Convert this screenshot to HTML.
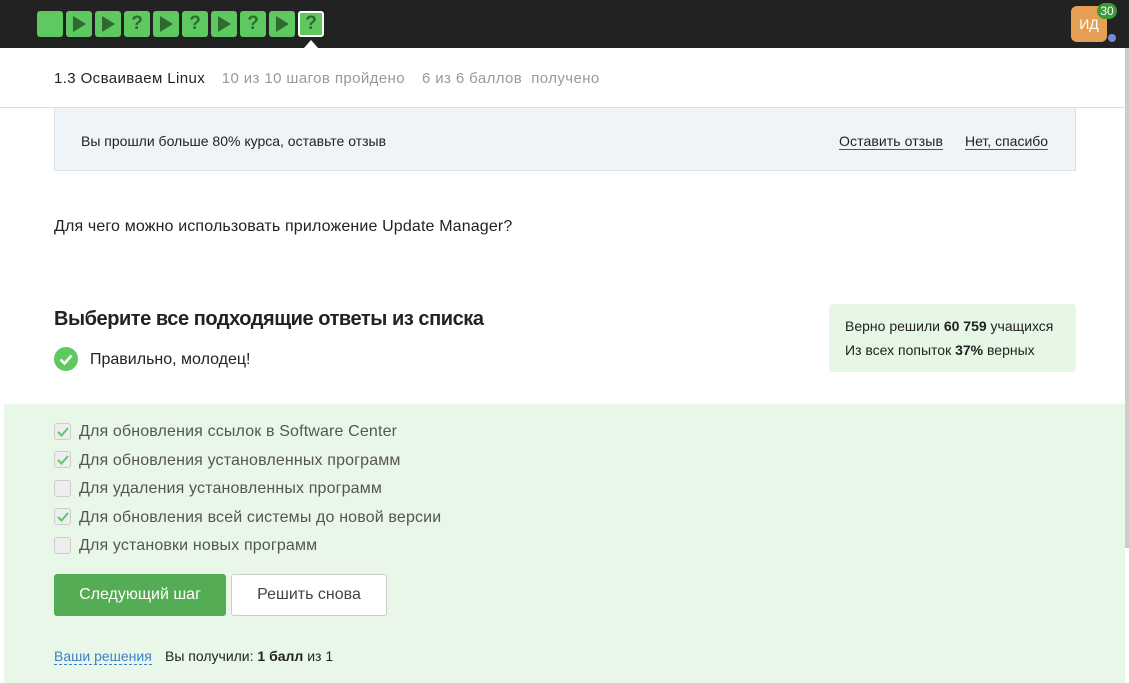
<!DOCTYPE html>
<html><head><meta charset="utf-8"><style>
*{margin:0;padding:0;box-sizing:border-box}
body{width:1129px;height:683px;overflow:hidden;background:#fff;font-family:"Liberation Sans",sans-serif;color:#222;position:relative}
.top{position:absolute;left:0;top:0;width:1129px;height:48px;background:#222}
.b{position:absolute;top:11px;width:26px;height:26px;background:#5ec960;border-radius:3px;color:#2f6a30;font-weight:bold;font-size:19px;text-align:center;line-height:26px}
.b.t::after{content:"";position:absolute;left:7px;top:5px;border-left:13px solid #2f6a30;border-top:8px solid transparent;border-bottom:8px solid transparent}
.b.cur{border:2px solid #fff;line-height:22px}
.abs{position:absolute;white-space:nowrap}
.cb{position:absolute;left:54px;width:17px;height:17px;border:1px solid #ccc;background:#eee;border-radius:3px}
.cb svg{position:absolute;left:1px;top:1px}
.opt{position:absolute;left:79px;font-size:16px;color:#555;letter-spacing:.15px}
</style></head><body>
<div class="top">
<div class="b" style="left:37px"></div>
<div class="b t" style="left:66px"></div>
<div class="b t" style="left:95px"></div>
<div class="b" style="left:124px">?</div>
<div class="b t" style="left:153px"></div>
<div class="b" style="left:182px">?</div>
<div class="b t" style="left:211px"></div>
<div class="b" style="left:240px">?</div>
<div class="b t" style="left:269px"></div>
<div class="b cur" style="left:298px">?</div>
<div style="position:absolute;left:304px;top:40px;border-left:7px solid transparent;border-right:7px solid transparent;border-bottom:8px solid #fff"></div>
<div style="position:absolute;left:1071px;top:6px;width:36px;height:36px;background:#e6a056;border-radius:6px;color:#fff;font-size:14px;text-align:center;line-height:36px">ИД</div>
<div style="position:absolute;left:1097px;top:3px;width:20px;height:16px;background:#3a9a3a;border-radius:8px;color:#fff;font-size:12px;text-align:center;line-height:16px">30</div>
<div style="position:absolute;left:1108px;top:34px;width:8px;height:8px;background:#7a86e0;border-radius:50%"></div>
</div>
<div class="abs" style="left:54px;top:70px;font-size:15px;color:#222;letter-spacing:.4px">1.3 Осваиваем Linux <span style="color:#999;margin-left:12px">10 из 10 шагов пройдено</span><span style="color:#999;margin-left:17px">6 из 6 баллов&nbsp; получено</span></div>
<div style="position:absolute;left:0;top:107px;width:1125px;height:1px;background:#ddd"></div>
<div style="position:absolute;left:54px;top:108px;width:1022px;height:63px;background:#eef4f8;border:1px solid #dde3e8;border-top:none"></div>
<div class="abs" style="left:81px;top:133px;font-size:14px">Вы прошли больше 80% курса, оставьте отзыв</div>
<div class="abs" style="left:839px;top:133px;font-size:14px;border-bottom:1px solid #555;letter-spacing:.1px">Оставить отзыв</div>
<div class="abs" style="left:965px;top:133px;font-size:14px;border-bottom:1px solid #555">Нет, спасибо</div>
<div class="abs" style="left:54px;top:218px;font-size:16px;letter-spacing:.15px">Для чего можно использовать приложение Update Manager?</div>
<div class="abs" style="left:54px;top:308px;font-size:20px;font-weight:bold;color:#222;letter-spacing:-.45px">Выберите все подходящие ответы из списка</div>
<div style="position:absolute;left:54px;top:347px;width:24px;height:24px;border-radius:50%;background:#5ec960"><svg width="24" height="24"><path d="M6.5 12.5l4 4 7-8" fill="none" stroke="#fff" stroke-width="2.5"/></svg></div>
<div class="abs" style="left:90px;top:351px;font-size:16px">Правильно, молодец!</div>
<div style="position:absolute;left:829px;top:304px;width:247px;height:68px;background:#e6f7e6;border-radius:4px"></div>
<div class="abs" style="left:845px;top:314px;font-size:14px;line-height:24px">Верно решили <b>60 759</b> учащихся<br>Из всех попыток <b>37%</b> верных</div>
<div style="position:absolute;left:4px;top:404px;width:1121px;height:279px;background:#e9f7e9"></div>
<div class="cb" style="top:423px"><svg width="14" height="14"><path d="M2 7l3.5 3.5L12 3" fill="none" stroke="#5ec960" stroke-width="2"/></svg></div>
<div class="opt" style="top:423px">Для обновления ссылок в Software Center</div>
<div class="cb" style="top:451px"><svg width="14" height="14"><path d="M2 7l3.5 3.5L12 3" fill="none" stroke="#5ec960" stroke-width="2"/></svg></div>
<div class="opt" style="top:452px">Для обновления установленных программ</div>
<div class="cb" style="top:480px"></div>
<div class="opt" style="top:480px">Для удаления установленных программ</div>
<div class="cb" style="top:508px"><svg width="14" height="14"><path d="M2 7l3.5 3.5L12 3" fill="none" stroke="#5ec960" stroke-width="2"/></svg></div>
<div class="opt" style="top:509px">Для обновления всей системы до новой версии</div>
<div class="cb" style="top:537px"></div>
<div class="opt" style="top:537px">Для установки новых программ</div>
<div style="position:absolute;left:54px;top:574px;width:172px;height:42px;background:#54ad54;border-radius:3px;color:#fff;font-size:16px;text-align:center;line-height:42px">Следующий шаг</div>
<div style="position:absolute;left:231px;top:574px;width:156px;height:42px;background:#fff;border:1px solid #ccc;border-radius:3px;color:#444;font-size:16px;text-align:center;line-height:40px">Решить снова</div>
<div class="abs" style="left:54px;top:648px;font-size:14px;color:#3d7fc6;border-bottom:1px dashed #3d7fc6">Ваши решения</div>
<div class="abs" style="left:165px;top:648px;font-size:14px">Вы получили: <b>1 балл</b> из 1</div>
<div style="position:absolute;left:1125px;top:48px;width:4px;height:500px;background:#ccc"></div>
</body></html>
